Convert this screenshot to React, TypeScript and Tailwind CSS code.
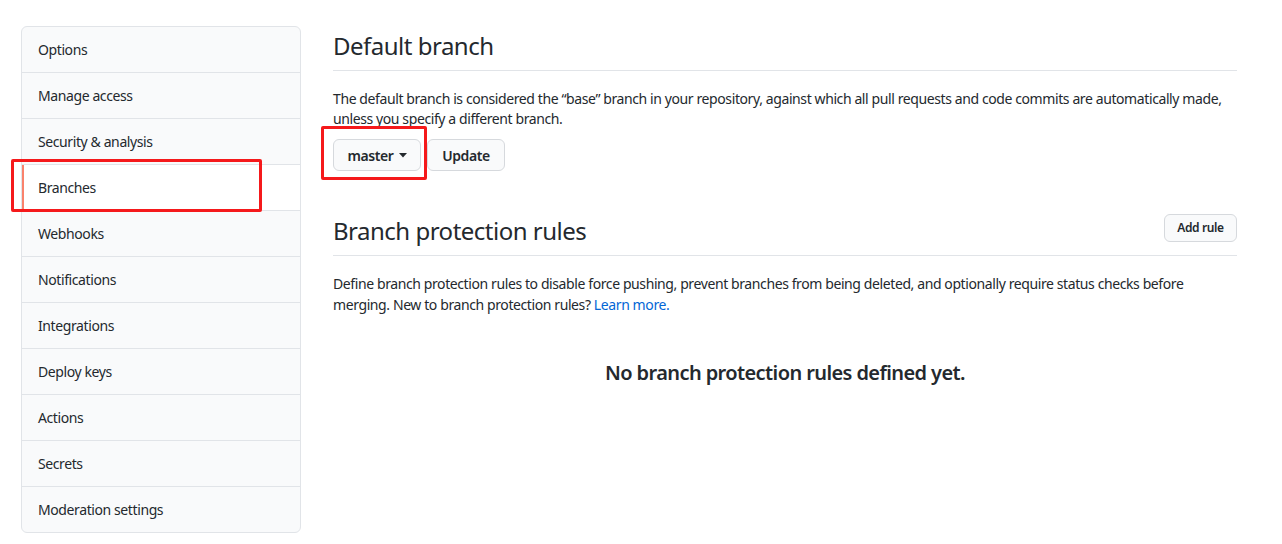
const MENU = [
  "Options",
  "Manage access",
  "Security & analysis",
  "Branches",
  "Webhooks",
  "Notifications",
  "Integrations",
  "Deploy keys",
  "Actions",
  "Secrets",
  "Moderation settings",
];

const SideNav = () => (
  <nav className="relative w-[280px] shrink-0 rounded-md border border-[#e1e4e8] bg-[#f9fafb] tracking-[-0.4px]">
    {MENU.map((item, i) => {
      const selected = item === "Branches";
      return (
        <div
          key={item}
          className={`relative flex items-center px-4 text-[14px] text-[#24292e] ${
            i > 0 ? "h-[46px] border-t border-[#e1e4e8]" : "h-[45px]"
          } ${selected ? "bg-white" : ""} ${i === 0 ? "rounded-t-md" : ""} ${
            i === MENU.length - 1 ? "rounded-b-md" : ""
          }`}
        >
          {selected && (
            <span className="absolute left-0 top-0 h-full w-[2px] bg-[#f9826c]" />
          )}
          {item}
        </div>
      );
    })}
    {/* annotation box */}
    <div className="pointer-events-none absolute left-[-11px] top-[132px] h-[53px] w-[251px] rounded-[2px] border-[3px] border-[#f5191b]" />
  </nav>
);

export default function App() {
  return (
    <div
      className="min-h-[544px] bg-white text-[#24292e]"
      style={{ fontFamily: '"Noto Sans", sans-serif' }}
    >
      <div className="flex gap-[32px] pl-[21px] pr-[45px] pt-[26px]">
        <SideNav />

        <main className="flex-1 tracking-[-0.4px]">
          <div className="flex h-[45px] items-end border-b border-[#e1e4e8] pb-[9px]">
            <h2 className="text-[24px] font-normal leading-[30px] tracking-[-0.5px]">Default branch</h2>
          </div>
          <p className="mt-[18px] text-[14px] leading-[20px]">
            The default branch is considered the “base” branch in your repository, against which all pull requests and code commits are automatically made, unless you specify a different branch.
          </p>
          <div className="relative mt-[10px] flex gap-[6px]">
            <button className="flex h-[32px] w-[88px] items-center justify-center gap-[5px] rounded-md border border-[#d6d9dd] bg-[#f9fafb] text-[14px] font-semibold">
              master
              <svg width="8" height="5" viewBox="0 0 8 5">
                <path d="M0 0h8L4 4.5z" fill="#24292e" />
              </svg>
            </button>
            <button className="h-[32px] w-[78px] rounded-md border border-[#d6d9dd] bg-[#f9fafb] text-[14px] font-semibold">
              Update
            </button>
            {/* annotation box */}
            <div className="pointer-events-none absolute left-[-12px] top-[-13px] h-[54px] w-[106px] rounded-[2px] border-[3px] border-[#f5191b]" />
          </div>

          <div className="mt-[43px] flex h-[42px] items-end justify-between border-b border-[#e1e4e8] pb-[12px]">
            <h2 className="mb-[-3px] text-[24px] font-normal leading-[30px] tracking-[-0.5px]">Branch protection rules</h2>
            <button className="mb-[1px] h-[28px] w-[73px] rounded-md border border-[#d6d9dd] bg-[#f9fafb] text-[12px] font-semibold">
              Add rule
            </button>
          </div>
          <p className="mt-[17px] text-[14px] leading-[21px]">
            Define branch protection rules to disable force pushing, prevent branches from being deleted, and optionally require status checks before merging. New to branch protection rules?{" "}
            <a className="text-[#0366d6]">Learn more.</a>
          </p>
          <p className="mt-[45px] text-center text-[20px] font-semibold leading-[26px] tracking-[-0.6px]">
            No branch protection rules defined yet.
          </p>
        </main>
      </div>
    </div>
  );
}
